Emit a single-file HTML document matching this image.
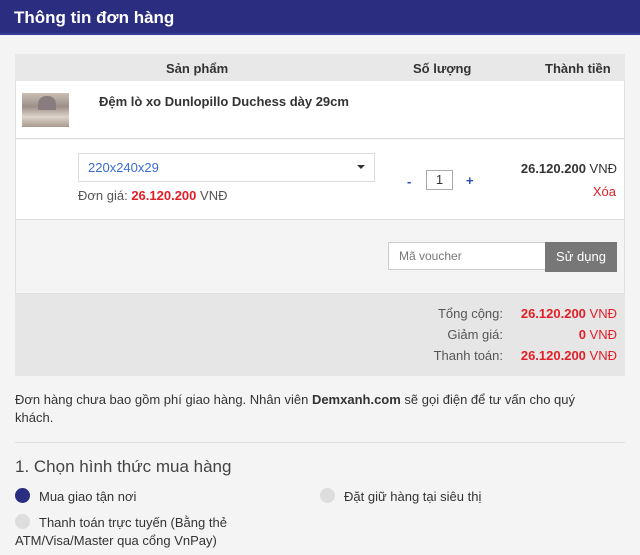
<!DOCTYPE html>
<html><head><meta charset="utf-8"><style>
*{margin:0;padding:0;box-sizing:border-box}
body{width:640px;height:555px;background:#f4f4f4;font-family:"Liberation Sans",sans-serif;font-size:13px;color:#333;position:relative;overflow:hidden}
.a{position:absolute;white-space:nowrap}
.b{font-weight:bold}
.r{color:#e41e26}
</style></head><body>
<div class="a" style="left:0;top:0;width:640px;height:35px;background:#2b2d80;border-bottom:2px solid #3a3d9a"></div>
<div class="a b" style="left:14px;top:8px;color:#fff;font-size:17px">Thông tin đơn hàng</div>

<div class="a" style="left:15px;top:54px;width:610px;height:240px;border:1px solid #e0e0e0;background:#f4f4f4"></div>
<div class="a" style="left:15px;top:54px;width:610px;height:27px;background:#e8e8e8"></div>
<div class="a b" style="left:166px;top:61px">Sản phẩm</div>
<div class="a b" style="left:413px;top:61px">Số lượng</div>
<div class="a b" style="left:545px;top:61px">Thành tiền</div>
<div class="a" style="left:16px;top:81px;width:608px;height:58px;background:#fff;border-bottom:1px solid #ddd"></div>
<div class="a" style="left:22px;top:93px;width:47px;height:34px;background:linear-gradient(180deg,#c9bfb6 0%,#9d8f88 40%,#ddd4cc 70%,#a89a8c 100%)"></div>
<div class="a" style="left:38px;top:96px;width:18px;height:14px;border-radius:8px 8px 0 0;background:#8a7d80"></div>
<div class="a b" style="left:99px;top:94px">Đệm lò xo Dunlopillo Duchess dày 29cm</div>
<div class="a" style="left:16px;top:140px;width:608px;height:80px;background:#fff;border-bottom:1px solid #ddd"></div>
<div class="a" style="left:78px;top:153px;width:297px;height:29px;border:1px solid #ddd;background:#fff"></div>
<div class="a" style="left:88px;top:160px;color:#3b6bd6">220x240x29</div>
<div class="a" style="left:357px;top:165px;width:0;height:0;border-left:4px solid transparent;border-right:4px solid transparent;border-top:4px solid #333"></div>
<div class="a" style="left:78px;top:188px;color:#555">Đơn giá: <span class="b r">26.120.200</span> VNĐ</div>
<div class="a b" style="left:407px;top:174px;color:#2b4fb8">-</div>
<div class="a" style="left:426px;top:170px;width:27px;height:20px;border:1px solid #aaa;background:#fff;text-align:center;line-height:18px">1</div>
<div class="a b" style="left:466px;top:173px;color:#2b4fb8">+</div>
<div class="a" style="right:23px;top:161px"><span class="b">26.120.200</span> VNĐ</div>
<div class="a r" style="right:24px;top:184px">Xóa</div>

<div class="a" style="left:388px;top:242px;width:158px;height:28px;border:1px solid #ccc;background:#fff;color:#777;padding:6px 10px;font-size:12px">Mã voucher</div>
<div class="a" style="left:545px;top:242px;width:72px;height:30px;background:#777;color:#fff;text-align:center;line-height:30px">Sử dụng</div>
<div class="a" style="left:15px;top:294px;width:610px;height:82px;background:#e6e6e6"></div>
<div class="a" style="right:137px;top:306px;color:#555">Tổng cộng:</div>
<div class="a" style="right:137px;top:327px;color:#555">Giảm giá:</div>
<div class="a" style="right:137px;top:348px;color:#555">Thanh toán:</div>
<div class="a" style="right:23px;top:306px"><span class="b r">26.120.200</span> <span class="r">VNĐ</span></div>
<div class="a" style="right:23px;top:327px"><span class="b r">0</span> <span class="r">VNĐ</span></div>
<div class="a" style="right:23px;top:348px"><span class="b r">26.120.200</span> <span class="r">VNĐ</span></div>

<div class="a" style="left:15px;top:391px;line-height:18px;white-space:normal;width:600px">Đơn hàng chưa bao gồm phí giao hàng. Nhân viên <b>Demxanh.com</b> sẽ gọi điện để tư vấn cho quý khách.</div>
<div class="a" style="left:15px;top:442px;width:610px;height:1px;background:#ddd"></div>
<div class="a" style="left:15px;top:457px;font-size:17px;color:#444">1. Chọn hình thức mua hàng</div>
<div class="a" style="left:15px;top:488px;width:15px;height:15px;border-radius:50%;background:#2b2d80"></div>
<div class="a" style="left:39px;top:489px">Mua giao tận nơi</div>
<div class="a" style="left:320px;top:488px;width:15px;height:15px;border-radius:50%;background:#ddd"></div>
<div class="a" style="left:344px;top:489px">Đặt giữ hàng tại siêu thị</div>
<div class="a" style="left:15px;top:514px;width:15px;height:15px;border-radius:50%;background:#ddd"></div>
<div class="a" style="left:39px;top:515px">Thanh toán trực tuyến (Bằng thẻ</div>
<div class="a" style="left:15px;top:533px">ATM/Visa/Master qua cổng VnPay)</div>
</body></html>
